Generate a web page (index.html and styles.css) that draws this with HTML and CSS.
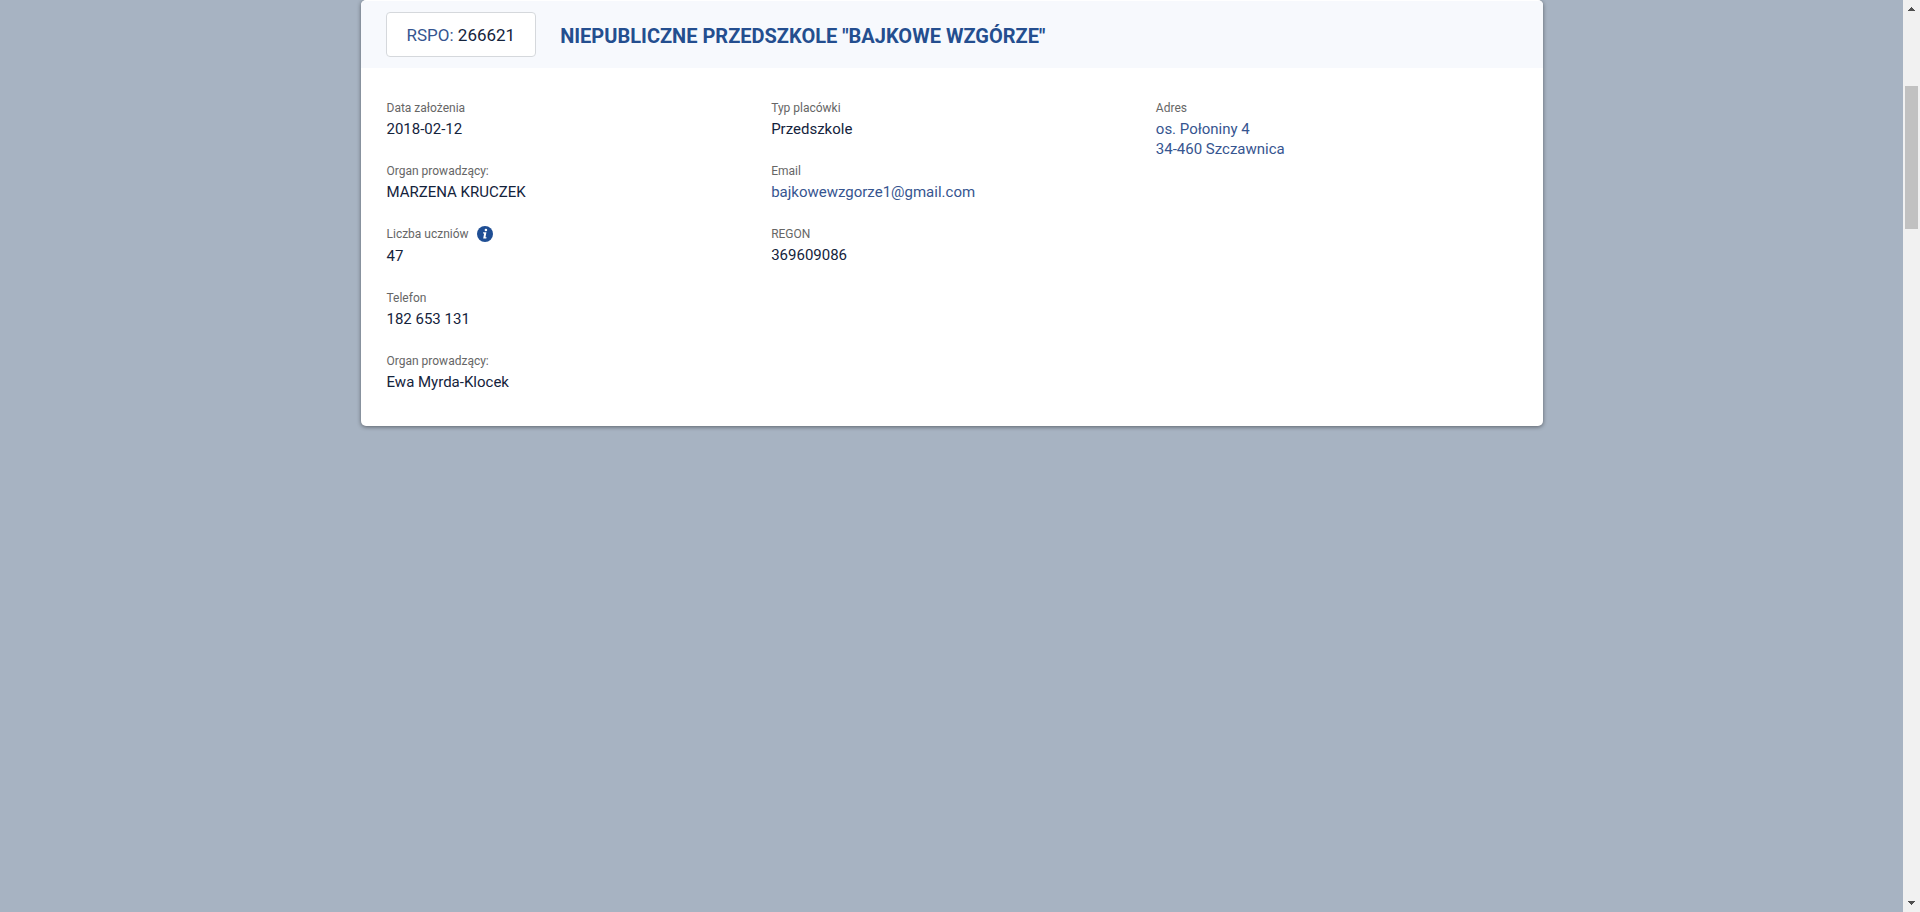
FILE: index.html
```html
<!DOCTYPE html>
<html lang="pl">
<head>
<meta charset="utf-8">
<title>Niepubliczne Przedszkole "Bajkowe Wzgórze"</title>
<link rel="stylesheet" href="styles.css">
</head>
<body>
<main class="page">
  <article class="card">
    <header class="card-header">
      <div class="rspo">RSPO: <span class="rspo-number">266621</span></div>
      <h1 class="title">NIEPUBLICZNE PRZEDSZKOLE "BAJKOWE WZGÓRZE"</h1>
    </header>
    <div class="details">
      <dl class="column">
        <div class="field"><dt>Data założenia</dt><dd>2018-02-12</dd></div>
        <div class="field"><dt>Organ prowadzący:</dt><dd>MARZENA KRUCZEK</dd></div>
        <div class="field">
          <dt>Liczba uczniów
            <button class="info" type="button" aria-label="Informacja o liczbie uczniów">
              <svg viewBox="0 0 16 16" width="16" height="16" aria-hidden="true">
                <circle cx="8" cy="8" r="8" fill="#1f4e94"/>
                <circle cx="8.9" cy="4" r="1.3" fill="#fff"/>
                <path d="M6.2 6.3h3.2L8.5 11.2h1.1l-.3 1.3H6.2l.9-4.9H6z" fill="#fff"/>
              </svg>
            </button>
          </dt>
          <dd>47</dd>
        </div>
        <div class="field"><dt>Telefon</dt><dd>182 653 131</dd></div>
        <div class="field"><dt>Organ prowadzący:</dt><dd>Ewa Myrda-Klocek</dd></div>
      </dl>
      <dl class="column">
        <div class="field"><dt>Typ placówki</dt><dd>Przedszkole</dd></div>
        <div class="field"><dt>Email</dt><dd><a href="mailto:bajkowewzgorze1@gmail.com">bajkowewzgorze1@gmail.com</a></dd></div>
        <div class="field"><dt>REGON</dt><dd>369609086</dd></div>
      </dl>
      <dl class="column">
        <div class="field"><dt>Adres</dt><dd><a href="#mapa">os. Połoniny 4<br>34-460 Szczawnica</a></dd></div>
      </dl>
    </div>
  </article>
</main>
<div class="scrollbar" aria-hidden="true">
  <svg class="arrow" viewBox="0 0 17 17"><path d="M8 7h1v1h1v1h1v1h1v1H5v-1h1V9h1V8h1z" fill="#505050"/></svg>
  <div class="track"><div class="thumb"></div></div>
  <svg class="arrow" viewBox="0 0 17 17"><path d="M5 6h7v1h-1v1h-1v1H9v1H8V9H7V8H6V7H5z" fill="#505050"/></svg>
</div>
</body>
</html>
```

FILE: styles.css
```css
* {
  box-sizing: border-box;
}

body {
  display: flex;
  min-height: 100vh;
  margin: 0;
  background: #a7b3c2;
  color: #14233c;
  font-family: Roboto, "Liberation Sans", sans-serif;
  font-size: 15px;
  line-height: 20px;
}

.page {
  flex: 1;
}

.card {
  max-width: 1182px;
  margin: 0 auto;
  overflow: hidden;
  border-top: 1px solid #fff;
  border-radius: 5px;
  background: #fff;
  box-shadow: 0 1px 4px rgba(0, 0, 0, 0.45);
}

.card-header {
  display: flex;
  align-items: center;
  gap: 24px;
  padding: 11px 25px;
  background: #f7f9fd;
}

.rspo {
  padding: 12px 20px 10px;
  border: 1px solid #d5d8dc;
  border-radius: 4px;
  background: #fff;
  color: #365590;
  font-size: 17px;
  line-height: 21px;
}

.rspo-number {
  color: #14233c;
}

.title {
  margin: 0;
  padding-top: 2px;
  color: #244e8f;
  font-size: 20px;
  font-weight: 700;
  line-height: 24px;
}

.details {
  display: grid;
  grid-template-columns: repeat(3, 1fr);
  padding: 32px 14px 34px;
}

.column {
  display: flex;
  flex-direction: column;
  gap: 24px;
  margin: 0;
  padding: 0 12px;
}

.field {
  display: flex;
  flex-direction: column;
  gap: 3px;
}

dt {
  display: flex;
  align-items: flex-start;
  gap: 8px;
  color: #666;
  font-size: 12px;
  line-height: 16px;
}

dd {
  margin: 0;
}

a {
  color: #365590;
  text-decoration: none;
}

.info {
  display: block;
  margin: 0 0 1px;
  padding: 0;
  border: 0;
  background: none;
  cursor: pointer;
}

.info svg {
  display: block;
}

.scrollbar {
  display: flex;
  flex-direction: column;
  width: 17px;
  background: #f1f1f1;
}

.arrow {
  display: block;
  width: 17px;
  height: 17px;
}

.track {
  display: grid;
  flex: 1;
  grid-template-rows: 69fr 143fr 666fr;
  padding: 0 2px;
}

.thumb {
  grid-row: 2;
  background: #c1c1c1;
}
```
